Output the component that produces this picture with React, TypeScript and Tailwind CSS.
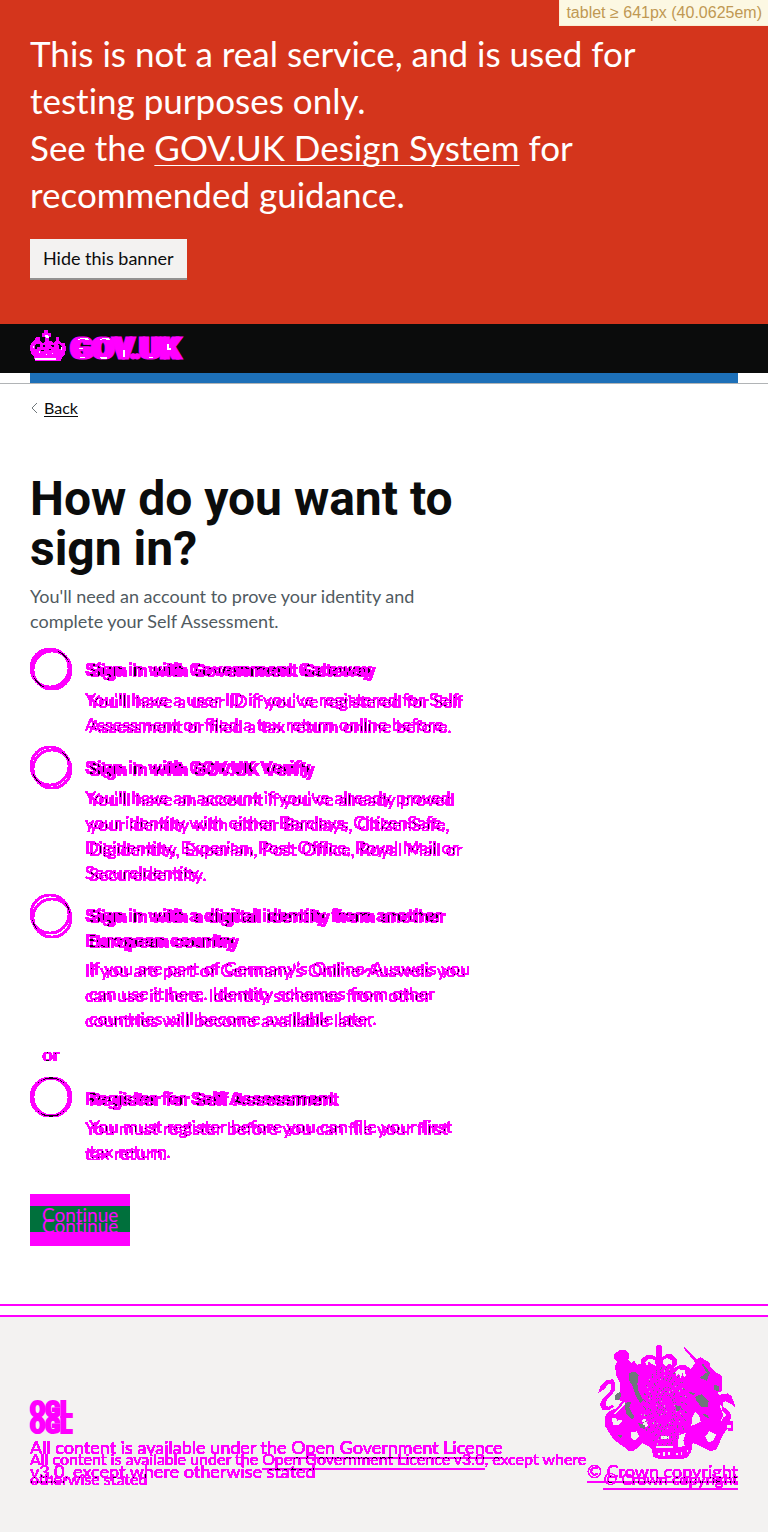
import type { ReactNode } from "react";

type Option = {
  id: string;
  label: ReactNode;
  hint: ReactNode;
  ghostCircle: string;
  ghostLabel: string;
  ghostHint: string;
};

const options: Option[] = [
  {
    id: "gateway",
    label: "Sign in with Government Gateway",
    hint: (
      <>
        You'll have a user ID if you've registered for Self
        <br />
        Assessment or filed a tax return online before.
      </>
    ),
    ghostCircle: "mt-0.5",
    ghostLabel: "pt-2.5",
    ghostHint: "pt-1.5",
  },
  {
    id: "verify",
    label: "Sign in with GOV.UK Verify",
    hint: (
      <>
        You'll have an account if you've already proved
        <br />
        your identity with either Barclays, CitizenSafe,
        <br />
        Digidentity, Experian, Post Office, Royal Mail or
        <br />
        SecureIdentity.
      </>
    ),
    ghostCircle: "mt-[3px]",
    ghostLabel: "pt-[11px]",
    ghostHint: "pt-[5px]",
  },
  {
    id: "european",
    label: (
      <>
        Sign in with a digital identity from another
        <br />
        European country
      </>
    ),
    hint: (
      <>
        If you are part of Germany’s Online-Ausweis you
        <br />
        can use it here. Identity schemes from other
        <br />
        countries will become available later.
      </>
    ),
    ghostCircle: "mt-1",
    ghostLabel: "pt-2.5",
    ghostHint: "pt-0.5",
  },
  {
    id: "register",
    label: "Register for Self Assessment",
    hint: (
      <>
        You must register before you can file your first
        <br />
        tax return.
      </>
    ),
    ghostCircle: "mt-0",
    ghostLabel: "pt-2.5",
    ghostHint: "pt-0.5",
  },
];

/* Hardens edges to solid magenta and darkens the pixels both layers share. */
function DiffFilters() {
  const alpha = "0 1 1 1 1 1 1 1 1 1 1 1 1 1 1 1 1 1 1 1 1 1 1 1 1 1 1 1 1 1 1 1 1 1 1 1";
  const shared = "1 1 1 1 1 1 1 1 1 1 1 .1 .1 .1 .1 .1";
  return (
    <svg className="absolute size-0" aria-hidden="true">
      <filter id="diff" x="-5%" y="-5%" width="115%" height="110%" colorInterpolationFilters="sRGB">
        <feColorMatrix values="0 0 0 1 0  0 0 0 0 0  0 0 0 1 0  0 0 0 1 0" />
        <feComponentTransfer>
          <feFuncR type="discrete" tableValues={shared} />
          <feFuncB type="discrete" tableValues={shared} />
          <feFuncA type="discrete" tableValues={alpha} />
        </feComponentTransfer>
      </filter>
    </svg>
  );
}

function Row({ o }: { o: Option }) {
  return (
    <div className="grid pb-[9px]">
      <div className="flex gap-[15px] [grid-area:1/1]">
        <input
          type="radio"
          name="sign-in"
          id={o.id}
          className="size-10 shrink-0 appearance-none rounded-full border-2 border-black/50"
        />
        <div>
          <label
            htmlFor={o.id}
            className="block pt-[9px] font-['Roboto'] text-[19px] leading-[25px] font-bold"
          >
            {o.label}
          </label>
          <p className="pt-[5px] text-[18px] leading-[25px]">{o.hint}</p>
        </div>
      </div>
      <div aria-hidden="true" className="-mb-2 flex gap-[17px] pl-0.5 [grid-area:1/1]">
        <span className={`size-10 shrink-0 rounded-full border-2 border-black/50 ${o.ghostCircle}`} />
        <div>
          <p className={`font-['Roboto'] text-[19px] leading-[25px] font-bold ${o.ghostLabel}`}>{o.label}</p>
          <p className={`text-[18px] leading-[25px] ${o.ghostHint}`}>{o.hint}</p>
        </div>
      </div>
    </div>
  );
}

function Logo() {
  return (
    <svg width="160" height="34" viewBox="0 0 160 34" role="img" aria-label="GOV.UK" shapeRendering="crispEdges">
      <g fill="#f0f">
        <path d="M14 0h4v3h3v4h-2v4h2l2 2 3-2V7h3v4l3 2h3l1 5-1 6-3 3-1 4H5L4 27 1 24 0 18l1-5 3-2 2-4h4v4l3 2 2-2V7h-3V3h2z" />
      </g>
      <g fill="#0b0c0c">
        <path d="M6 14h4v3H7v2H5v-3zM28 14h2l2 3-1 2h-2v-3zM13 15h2v2h-2zM21 15h3v2h-2zM11 20h3v1h-3zM19 19h2v1h-2z" />
      </g>
      <g fill="#fff">
        <path d="M5 28h21v2H5zM15 5h3v1h1v2h-3zM3 16h1v2H3zM31 17h1v3h-1zM9 21h1v2H9zM22 23h1v1h-1zM16 24h1v1h-1z" />
      </g>
      <g fill="#f0f" stroke="#f0f" className="font-['Roboto'] text-[31px] font-black">
        <text x="39" y="29">
          GOV.UK
        </text>
        <text x="43" y="29">
          GOV.UK
        </text>
      </g>
      <g fill="#fff">
        <path d="M47 10l4-2h6l2 2h-3l-3-1zM48 27h6l2 1h-5zM49 18h4v1h-4zM69 10l4-2h5l2 2h-3l-3-1zM69 27h7l2 1-3 1h-3zM93 20h2v7h-2zM117 27h6v1h-3zM137 14h2v4h2v2h-4z" />
      </g>
    </svg>
  );
}

/* Deterministic speckle used on the body of the coat of arms. */
const specks = Array.from({ length: 210 }, (_, i) => {
  const a = (i * 2.39996) % 6.28318;
  const r = Math.sqrt(((i * 97) % 211) / 211);
  return {
    x: Math.round((215 + Math.cos(a) * r * 70) / 3) * 3,
    y: Math.round((195 + Math.sin(a) * r * 120) / 3) * 3,
    light: i % 6 === 0,
  };
});

function Crest() {
  return (
    <svg width="140" height="114" viewBox="18 15 420 342" aria-hidden="true" shapeRendering="crispEdges">
      <g fill="#f0f">
        <path d="M66 42L78 34L84 30H100L112 40V54L106 58L118 68L126 62L134 74L148 72V58L164 44H180L192 52V20L196 15H206L210 20V52L224 42H240L254 58V74L246 84L262 76H282L296 88L310 68L302 58L276 26V20L314 58L326 52L340 60L352 68L356 82L374 98L390 108V154L376 158L390 176L384 200L394 224L386 244H424L422 272H408L406 266L390 290L374 328L356 334L336 324L302 308L298 334L286 352L270 357H200L184 350L178 324L152 310L126 332H110L92 318L66 300L50 276L38 256V232L48 216L74 204L90 184L72 176L84 156V130L74 110L68 78L76 64L66 56Z" />
        <path d="M18 160L26 138L44 120L62 118L70 128V148L58 166L44 180L40 196L50 200L60 194L66 200L52 210H32L24 194L30 178L50 160L58 144L56 132H48L40 144L28 154Z" />
        <path d="M384 164L408 160L418 168L426 188L430 202L418 192L400 184L392 188L394 200L412 214L418 230L412 248L396 252L390 242L394 232L404 226L390 210Z" />
      </g>
      <g fill="#f3f2f1">
        <path d="M160 68L172 56L188 60L192 78L180 72L170 64L166 78ZM212 60L226 54L240 62V74L228 72L222 78L212 70ZM250 98L260 88L278 90L282 108L276 112L272 98L266 114L260 100L254 110ZM58 236L70 232L76 242L94 238L82 254H64ZM116 278L134 274L142 290L126 302L118 294ZM340 290L352 274L372 284L362 304L348 306ZM258 306L262 286L282 278L274 300L278 318L258 322ZM300 232L310 216L322 228L326 246L312 252L298 258ZM150 240L160 236L168 256L158 264ZM208 288H230V296H208ZM192 318H242V324H192ZM406 256H416V264H406ZM66 222L98 186L102 190L72 222Z" />
        <path d="M198 338h5v7h-5zM214 336h4v12h-4zM228 337h5v9h-5zM252 338h7v8h-7zM268 337h3v9h-3zM284 330h3v6h-3z" />
      </g>
      <g fill="#6f777b">
        <path d="M112 100l14-6 14 10-4 28 4 22 14 28-8 8-14-20-10-32-10-16zM70 166l14-12 4 14-10 14-10-4zM98 190l20-6-6 20 16 28-8 6-18-16zM310 170l20-8 20 22-4 18-18-2-16-18zM322 114l22-16-14-24 4-2 20 26-10 24-10-4zM366 134l16 4-2 16-14-4zM138 248l20 8 2 12-16-6zM332 222l14 2 6 10-10-2zM76 284l14 2-4 10zM290 154l18 6-4 5-14-6zM250 196l16 2-4 14-10 4z" />
        {specks.map((s, i) => (
          <rect key={i} x={s.x} y={s.y} width="3" height={i % 5 ? 3 : 6} fill={s.light ? "#c5c5c5" : "#6f777b"} />
        ))}
      </g>
    </svg>
  );
}

function LicenceLine({ children }: { children: ReactNode }) {
  return <p className="whitespace-nowrap">{children}</p>;
}

export default function App() {
  return (
    <div className="relative bg-white font-['Lato','Noto_Sans',sans-serif] text-[#0b0c0c] [font-variant-ligatures:none]">
      <DiffFilters />
      <div className="absolute top-0 right-0 border-b border-l border-[#fbeed5] bg-[#fcf8e3] px-1.5 font-['Liberation_Sans',sans-serif] text-[16px] leading-[25px] text-[#c09853]">
        tablet ≥ 641px (40.0625em)
      </div>

      <section className="bg-[#d4351c] px-[30px] pt-[30px] pb-11 text-white">
        <p className="max-w-[640px] text-[35px] leading-[47px]">
          This is not a real service, and is used for testing purposes only.
          <br />
          See the{" "}
          <a href="#design-system" className="underline decoration-1 underline-offset-4 [text-decoration-skip-ink:none]">
            GOV.UK Design System
          </a>{" "}
          for
          <br />
          recommended guidance.
        </p>
        <button
          type="button"
          className="mt-[21px] block border-b-2 border-[#929191] bg-[#f3f2f1] px-[13px] text-[18px] leading-[39px] text-[#0b0c0c]"
        >
          Hide this banner
        </button>
      </section>

      <header className="border-b border-[#b1b4b6] bg-[#0b0c0c]">
        <div className="h-[49px] px-[30px] pt-1.5">
          <Logo />
        </div>
        <div className="bg-white px-[30px]">
          <div className="h-2.5 bg-[#1d70b8]" />
        </div>
      </header>

      <main className="px-[30px]">
        <a href="#back" className="flex w-fit items-center gap-1.5 pt-[15px] text-[16px] leading-5">
          <svg width="8" height="12" viewBox="0 0 8 12" fill="none" stroke="#6f777b" aria-hidden="true">
            <path d="M7 1L2 6l5 5" />
          </svg>
          <span className="border-b border-[#0b0c0c] leading-[17px]">Back</span>
        </a>
        <h1 className="pt-[57px] font-['Roboto'] text-[48px] leading-[50px] font-bold">
          How do you want to
          <br />
          sign in?
        </h1>
        <p className="pt-2.5 text-[18px] leading-[25px] text-[#505a5f]">
          You'll need an account to prove your identity and
          <br />
          complete your Self Assessment.
        </p>

        <form onSubmit={(e) => e.preventDefault()}>
          <fieldset className="mt-3.5 text-black/50 filter-[url(#diff)]">
            <legend className="sr-only">How do you want to sign in?</legend>
            {options.slice(0, 3).map((o) => (
              <Row key={o.id} o={o} />
            ))}
            <div className="grid pb-2.5 pl-3 text-[18px] leading-[25px]">
              <p className="[grid-area:1/1]">or</p>
              <p aria-hidden="true" className="pl-px [grid-area:1/1]">
                or
              </p>
            </div>
            <Row o={options[3]} />
          </fieldset>
          <button
            type="submit"
            className="mt-[19px] block border-t-12 border-b-14 border-[#f0f] bg-[#00703c] px-3 pt-[3px] pb-px text-[19px] leading-[11px] text-[#f0f]"
          >
            <span className="block">Continue</span>
            <span className="block" aria-hidden="true">
              Continue
            </span>
          </button>
        </form>
      </main>

      <footer className="mt-[58px] border-t-2 border-[#f0f] pt-[9px]">
        <div className="flex items-end justify-between border-t-2 border-[#f0f] bg-[#f3f2f1] px-[30px] pt-7 pb-[43px]">
          <div className="w-0 grow">
            <div
              aria-hidden="true"
              className="pb-px font-['Roboto'] text-[22px] leading-4 font-black text-[#f0f] [-webkit-text-stroke:2px_#f0f]"
            >
              <p>OGL</p>
              <p>OGL</p>
            </div>
            <div className="grid text-black/50 filter-[url(#diff)]">
              <div className="text-[18px] leading-6 [grid-area:1/1]">
                <LicenceLine>
                  All content is available under the{" "}
                  <a href="#licence" className="underline decoration-2 underline-offset-3">
                    Open Government Licence
                  </a>
                </LicenceLine>
                <LicenceLine>
                  <a href="#licence" className="underline decoration-2 underline-offset-3">
                    v3.0
                  </a>
                  , except where otherwise stated
                </LicenceLine>
              </div>
              <div aria-hidden="true" className="pt-3.5 text-[16px] leading-5 [grid-area:1/1]">
                <LicenceLine>
                  All content is available under the{" "}
                  <span className="underline decoration-2 underline-offset-3">Open Government Licence v3.0</span>, except
                  where
                </LicenceLine>
                <LicenceLine>otherwise stated</LicenceLine>
              </div>
            </div>
          </div>
          <div className="flex flex-col items-end">
            <Crest />
            <div className="grid justify-items-end whitespace-nowrap text-black/50 filter-[url(#diff)]">
              <a
                href="#copyright"
                className="text-[18px] leading-6 underline decoration-2 underline-offset-3 [grid-area:1/1]"
              >
                © Crown copyright
              </a>
              <span
                aria-hidden="true"
                className="pt-2.5 text-[16px] leading-5 underline decoration-2 underline-offset-3 [grid-area:1/1]"
              >
                © Crown copyright
              </span>
            </div>
          </div>
        </div>
      </footer>
    </div>
  );
}
